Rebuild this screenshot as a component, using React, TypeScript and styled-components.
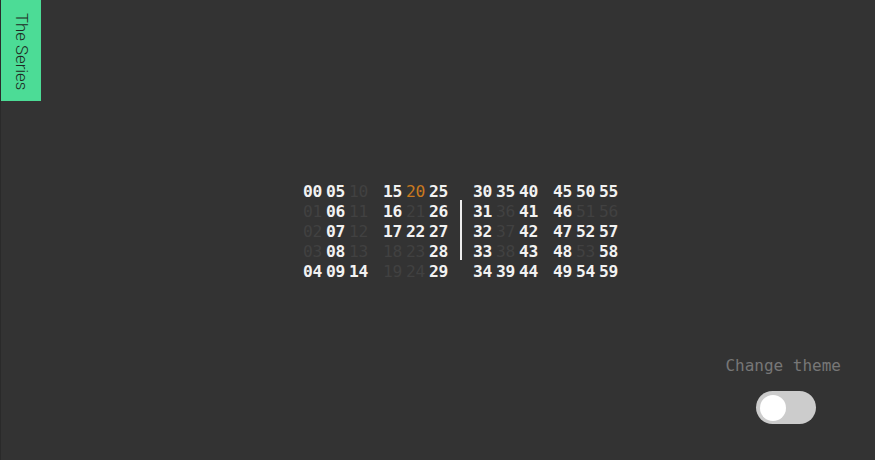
import React from 'react'
import styled, { createGlobalStyle } from 'styled-components'

const GlobalStyle = createGlobalStyle`
  html, body, #root {
    height: 100%;
  }
  body {
    margin: 0;
    background: #333333;
    font-family: "DejaVu Sans Mono", "Liberation Mono", monospace;
  }
`

const ACTIVE = new Set([
  0, 5, 15, 25, 30, 35, 40, 45, 50, 55,
  6, 16, 26, 31, 41, 46,
  7, 17, 22, 27, 32, 42, 47, 52, 57,
  8, 28, 33, 43, 48, 58,
  4, 9, 14, 29, 34, 39, 44, 49, 54, 59,
])
const CURRENT = 20

const Page = styled.div`
  display: grid;
  height: 100%;
  box-sizing: border-box;
  border-left: 1px solid #2a2a2a;
  & > * {
    grid-area: 1 / 1;
  }
`

const SeriesTab = styled.a`
  align-self: start;
  justify-self: start;
  width: 40px;
  height: 101px;
  box-sizing: border-box;
  padding: 13px 0 0 2px;
  background: #4cdc96;
  color: #1f2a24;
  font-family: Roboto, "Noto Sans", sans-serif;
  font-weight: 300;
  font-size: 16.8px;
  line-height: 38px;
  writing-mode: vertical-rl;
  text-decoration: none;
`

const Clock = styled.div`
  align-self: center;
  justify-self: center;
  display: flex;
  padding: 4px 0 0 46px;
`

const Half = styled.div`
  display: flex;
  gap: 14px;
`

const Group = styled.div`
  display: flex;
  gap: 3px;
`

const Column = styled.div`
  display: flex;
  flex-direction: column;
`

const Cell = styled.span<{ $state: 'on' | 'off' | 'now' }>`
  width: 20px;
  height: 20px;
  line-height: 20px;
  font-size: 16.3px;
  letter-spacing: -0.4px;
  font-weight: ${(p) => (p.$state === 'on' ? 700 : 400)};
  color: ${(p) =>
    p.$state === 'on' ? '#f2f2f2' : p.$state === 'now' ? '#c9791f' : '#414141'};
`

const Divider = styled.div`
  width: 2px;
  margin: 18px 11px 22px;
  background: #eeeeee;
`

const ThemeControl = styled.div`
  align-self: end;
  justify-self: end;
  display: flex;
  flex-direction: column;
  align-items: center;
  gap: 15px;
  padding: 0 34px 36px 0;
`

const ThemeLabel = styled.span`
  color: #777777;
  font-size: 16px;
  line-height: 20px;
  font-weight: 300;
`

const Toggle = styled.button`
  position: relative;
  width: 60px;
  height: 33px;
  margin-left: 6px;
  border: none;
  border-radius: 17px;
  background: #cccccc;
  padding: 0;
  cursor: pointer;
`

const Knob = styled.span`
  position: absolute;
  top: 3.5px;
  left: 4px;
  width: 26px;
  height: 26px;
  border-radius: 50%;
  background: #ffffff;
`

const ClockGroup = ({ start }: { start: number }) => (
  <Group>
    {[0, 1, 2].map((c) => (
      <Column key={c}>
        {[0, 1, 2, 3, 4].map((r) => {
          const n = start + c * 5 + r
          const state = n === CURRENT ? 'now' : ACTIVE.has(n) ? 'on' : 'off'
          return (
            <Cell key={n} $state={state}>
              {String(n).padStart(2, '0')}
            </Cell>
          )
        })}
      </Column>
    ))}
  </Group>
)

const App = () => {
  return (
    <>
      <GlobalStyle />
      <Page>
        <SeriesTab href="#">The Series</SeriesTab>
        <Clock>
          <Half>
            <ClockGroup start={0} />
            <ClockGroup start={15} />
          </Half>
          <Divider />
          <Half>
            <ClockGroup start={30} />
            <ClockGroup start={45} />
          </Half>
        </Clock>
        <ThemeControl>
          <ThemeLabel>Change theme</ThemeLabel>
          <Toggle aria-label="Change theme">
            <Knob />
          </Toggle>
        </ThemeControl>
      </Page>
    </>
  )
}

export default App
